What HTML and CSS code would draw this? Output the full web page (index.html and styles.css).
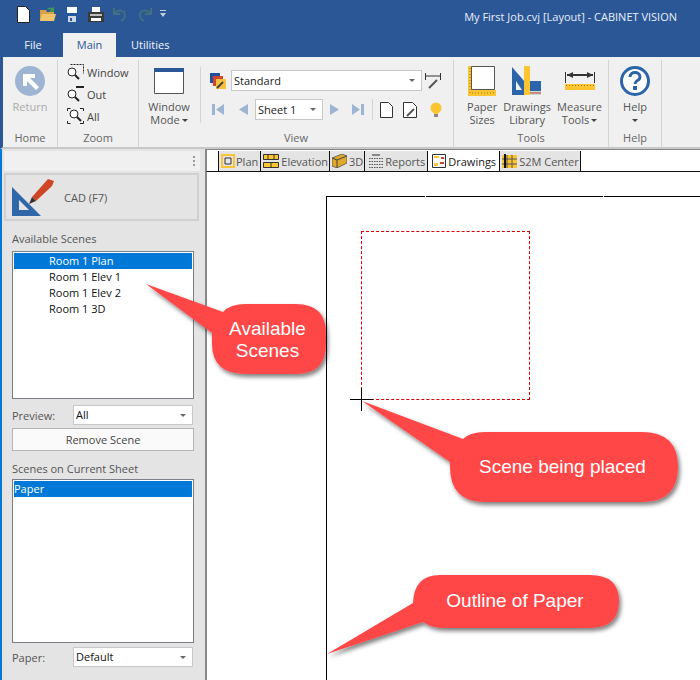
FILE: index.html
```html
<!DOCTYPE html>
<html>
<head>
    <meta charset="UTF-8">
    <title>My First Job.cvj [Layout] - CABINET VISION</title>
    <link rel="stylesheet" href="styles.css">
</head>
<body>
<div class="app">
    <header class="titlebar">
        <div class="qat">
            <svg width="13" height="17" viewBox="0 0 13 17"><path d="M.5.5h8l4 4v12H.5z" fill="#fff" stroke="#222"/></svg>
            <svg width="16" height="16" viewBox="0 0 16 16"><path d="M0 4h6l1 2h7v9H0z" fill="#d9a04a"/><path d="M2 8h14l-2 7H0z" fill="#f2c46b"/><path d="M7 4c1-3 3-3 5-2l2-1v5h-5l2-2c-1-1-2-1-4 0z" fill="#3f9a5a"/></svg>
            <svg width="14" height="15" viewBox="0 0 14 15"><path d="M0 0h14v15H0z" fill="#24589e"/><path d="M2 0h10v6H2z" fill="#fff"/><path d="M3 9h8v6H3z" fill="#cfd6e2"/><path d="M5 11h2v3H5z" fill="#24589e"/></svg>
            <svg width="16" height="15" viewBox="0 0 16 15"><path d="M4 0h8v5H4z" fill="#fff"/><path d="M0 5h16v10H0z" fill="#3a3a3a"/><path d="M2 7h12v2H2z" fill="#bbb"/><path d="M3 11h10v3H3z" fill="#fff"/></svg>
            <svg width="13" height="15" viewBox="0 0 13 15"><path d="M1 1v6h6M2 6c3-4 10-3 10 2 0 3-2 5-4 6" fill="none" stroke="#41707f" stroke-width="2"/></svg>
            <svg class="qat-redo" width="14" height="15" viewBox="0 0 14 15"><path d="M13 1v6H7M12 6C9 2 2 3 2 8c0 3 2 5 4 6" fill="none" stroke="#41707f" stroke-width="2"/></svg>
            <svg class="qat-more" width="6" height="8" viewBox="0 0 6 8"><path d="M0 0h6v1H0zM0 3h6L3 7z" fill="#c4cede"/></svg>
        </div>
        <div class="doc-title">My First Job.cvj [Layout] - CABINET VISION</div>
    </header>

    <nav class="ribbon-tabs">
        <span class="rtab rtab-file">File</span>
        <span class="rtab active">Main</span>
        <span class="rtab">Utilities</span>
    </nav>

    <section class="ribbon">
        <div class="group g-home">
            <div class="group-body">
                <div class="big disabled">
                    <svg width="30" height="30" viewBox="0 0 30 30"><circle cx="15" cy="15" r="15" fill="#9db4d2"/><path d="M8 8h12v4h-5l9 9-3 3-9-9v5H8z" fill="#fff"/></svg>
                    <span>Return</span>
                </div>
            </div>
            <div class="group-name">Home</div>
        </div>
        <div class="group g-zoom">
            <div class="group-body zoom-list">
                <div class="zoom-row"><svg width="17" height="16" viewBox="0 0 17 16"><path d="M3.500 .5h13v9" fill="none" stroke="#222" stroke-dasharray="2 1"/><circle cx="5" cy="8" r="4" fill="#fff" stroke="#222"/><path d="M8 11l4 4" stroke="#222" stroke-width="2"/></svg>Window</div>
                <div class="zoom-row"><svg width="17" height="16" viewBox="0 0 17 16"><path d="M9 1h8" stroke="#222" stroke-width="2"/><circle cx="5" cy="8" r="4" fill="#fff" stroke="#222"/><path d="M8 11l4 4" stroke="#222" stroke-width="2"/></svg>Out</div>
                <div class="zoom-row"><svg width="17" height="16" viewBox="0 0 17 16"><path d="M.5 3V.5h3M13 .5h3.500V3M16.500 13v2.500H13M3.500 15.500H.5V13" fill="none" stroke="#222"/><circle cx="7" cy="6" r="4" fill="#fff" stroke="#222"/><path d="M10 9l4 4" stroke="#222" stroke-width="2"/></svg>All</div>
            </div>
            <div class="group-name">Zoom</div>
        </div>
        <div class="group g-view">
            <div class="group-body view-body">
                <div class="big window-mode">
                    <svg width="30" height="26" viewBox="0 0 30 26"><path d="M.5.5h29v25H.5z" fill="#fff" stroke="#555"/><path d="M0 0h30v4H0z" fill="#2b5797"/></svg>
                    <span>Window<br>Mode<i class="caret"></i></span>
                </div>
                <div class="view-rows">
                    <div class="view-row">
                        <svg width="16" height="16" viewBox="0 0 16 16"><path d="M0 0h10v10H0z" fill="#1f4fa0"/><path d="M3 3h10v10H3z" fill="#d2452c"/><path d="M6 6h10v10H6z" fill="#f8c23c"/><path d="M7 15l6-6" stroke="#444" stroke-width="2"/></svg>
                        <div class="combo combo-std">Standard<i class="drop"></i></div>
                        <svg class="std-tool" width="16" height="16" viewBox="0 0 16 16"><path d="M.5 0v7M15.500 0v7M1 3h14" fill="none" stroke="#333"/><path d="M4 15l8-8" stroke="#555" stroke-width="2"/></svg>
                    </div>
                    <div class="view-row nav-row">
                        <svg width="12" height="11" viewBox="0 0 12 11"><path d="M0 0h3v11H0zM12 0v11L4 5.500z" fill="#9db4d2"/></svg>
                        <svg class="nav-prev" width="9" height="11" viewBox="0 0 9 11"><path d="M9 0v11L0 5.500z" fill="#9db4d2"/></svg>
                        <div class="combo combo-sheet">Sheet 1<i class="drop"></i></div>
                        <svg width="9" height="11" viewBox="0 0 9 11"><path d="M0 0v11l9-5.500z" fill="#9db4d2"/></svg>
                        <svg class="nav-last" width="12" height="11" viewBox="0 0 12 11"><path d="M9 0h3v11H9zM0 0v11l8-5.500z" fill="#9db4d2"/></svg>
                        <b class="sep"></b>
                        <svg width="13" height="16" viewBox="0 0 13 16"><path d="M.5.5h8l4 4v11H.5z" fill="#fff" stroke="#333"/></svg>
                        <svg class="page-tool" width="14" height="16" viewBox="0 0 14 16"><path d="M.5.5h9l4 4v11H.5z" fill="#fff" stroke="#333"/><path d="M4 14l7-7" stroke="#555" stroke-width="2"/></svg>
                        <svg class="bulb" width="12" height="16" viewBox="0 0 12 16"><circle cx="6" cy="6" r="5.500" fill="#fbc531"/><path d="M4 10h4v5H4z" fill="#fbc531"/><path d="M4 12h4v3H4z" fill="#888"/></svg>
                    </div>
                </div>
            </div>
            <div class="group-name">View</div>
        </div>
        <div class="group g-tools">
            <div class="group-body tools-body">
                <div class="big tool">
                    <svg width="28" height="30" viewBox="0 0 28 30"><path d="M0 0h6v24h22v6H0z" fill="#fbc531"/><path d="M3.500.5h23v23h-23z" fill="#fff" stroke="#555"/><path d="M2 2v25h24" fill="none" stroke="#a8791a" stroke-dasharray="1 2"/></svg>
                    <span>Paper<br>Sizes</span>
                </div>
                <div class="big tool">
                    <svg width="30" height="30" viewBox="0 0 30 30"><path d="M0 1l13 15v13H0z" fill="#2b64a8"/><path d="M4 15l6 9H4z" fill="#f0f0f0"/><path d="M12 0h6v29h-6z" fill="#fbc531"/><path d="M18 15h11v10H18z" fill="#2b64a8"/><path d="M18 25h11v4H18z" fill="#cfe0cf"/><path d="M18 27h11" stroke="#b33"/></svg>
                    <span>Drawings<br>Library</span>
                </div>
                <div class="big tool">
                    <svg width="30" height="30" viewBox="0 0 30 30"><path d="M.5 6v11M29.500 6v11" stroke="#333"/><path d="M2 9h26" stroke="#333" stroke-width="2"/><path d="M8 6v6L2 9zM22 6v6l6-3z" fill="#333"/><path d="M0 18h30v6H0z" fill="#fbc531"/><path d="M1 19.500h28" stroke="#a8791a" stroke-dasharray="1 2"/></svg>
                    <span>Measure<br>Tools<i class="caret"></i></span>
                </div>
            </div>
            <div class="group-name">Tools</div>
        </div>
        <div class="group g-help">
            <div class="group-body">
                <div class="big">
                    <svg width="30" height="30" viewBox="0 0 30 30"><circle cx="15" cy="15" r="13.500" fill="#fff" stroke="#2b64a8" stroke-width="3"/><path d="M10 11c0-6 10-6 10 0 0 4-5 3-5 7" fill="none" stroke="#2b64a8" stroke-width="3"/><path d="M13 20h4v4h-4z" fill="#2b64a8"/></svg>
                    <span>Help<br><i class="caret solo"></i></span>
                </div>
            </div>
            <div class="group-name">Help</div>
        </div>
    </section>

    <main class="workspace">
        <aside class="side">
            <div class="side-grip"><span></span></div>
            <div class="cad-btn">
                <svg width="42" height="38" viewBox="0 0 42 38"><path d="M0 9l29 29H0z" fill="#2f67a8"/><path d="M7 22l10 10H7z" fill="#e4e4e4"/><path d="M20 19L36 1l6 2-2 5-16 15z" fill="#cf4527"/><path d="M20 19l4 4-7 3z" fill="#333"/></svg>
                <span>CAD (F7)</span>
            </div>
            <div class="side-label">Available Scenes</div>
            <div class="listbox list-top">
                <div class="item sel indent">Room 1 Plan</div>
                <div class="item indent">Room 1 Elev 1</div>
                <div class="item indent">Room 1 Elev 2</div>
                <div class="item indent">Room 1 3D</div>
            </div>
            <div class="field">
                <label>Preview:</label>
                <div class="combo combo-side">All<i class="drop"></i></div>
            </div>
            <div class="side-btn">Remove Scene</div>
            <div class="side-label tight">Scenes on Current Sheet</div>
            <div class="listbox list-bottom">
                <div class="item sel">Paper</div>
            </div>
            <div class="field field-last">
                <label>Paper:</label>
                <div class="combo combo-side">Default<i class="drop"></i></div>
            </div>
        </aside>
        <div class="splitter"></div>
        <div class="doc">
            <div class="doc-tabs">
                <span class="dtab dtab-plan"><svg width="14" height="14" viewBox="0 0 14 14"><path d="M1 1h12v12H1z" fill="none" stroke="#fbc531" stroke-width="2"/><path d="M4 4h6v6H4z" fill="none" stroke="#333"/></svg>Plan</span>
                <span class="dtab"><svg width="16" height="14" viewBox="0 0 16 14"><path d="M0 0h16v6H0zM0 8h16v6H0z" fill="#fbc531"/><path d="M.5.5h15v5H.5zM.5 8.500h15v5H.5zM5 0v6M11 0v6M8 8v6" fill="none" stroke="#333"/></svg>Elevation</span>
                <span class="dtab"><svg width="15" height="14" viewBox="0 0 15 14"><path d="M0 4l10-4 5 2v7L5 14l-5-2z" fill="#e0a92c" stroke="#444" stroke-width=".7"/><path d="M5 14V6l10-4M0 4l5 2" fill="none" stroke="#444"/></svg>3D</span>
                <span class="dtab dtab-wide"><svg width="14" height="14" viewBox="0 0 14 14"><path d="M3 0h8v2H3z" fill="#888"/><path d="M0 4.500h14M0 7.500h14M0 10.500h14M0 13.500h14" fill="none" stroke="#555" stroke-dasharray="1.500 1"/></svg>Reports</span>
                <span class="dtab current"><svg width="14" height="14" viewBox="0 0 14 14"><path d="M.5.5h13v13H.5z" fill="#fff" stroke="#333"/><path d="M2 2h5v2H2zM2 9h4v3H2z" fill="#fbc531"/><path d="M9 3h3v2H9zM8 8h4v2H8z" fill="#d2452c"/></svg>Drawings</span>
                <span class="dtab"><svg width="15" height="14" viewBox="0 0 15 14"><path d="M0 1h15v13H0z" fill="#fbc531"/><path d="M5 1v13M10 1v13M0 5h15M0 10h15" stroke="#555"/><path d="M3 0v14" stroke="#111" stroke-width="2"/></svg>S2M Center</span>
            </div>
            <div class="canvas">
                <div class="paper">
                    <i class="paper-gap gap-a"></i>
                    <i class="paper-gap gap-b"></i>
                    <div class="scene"></div>
                </div>
                <svg class="cross" width="23" height="23" viewBox="0 0 23 23"><path d="M11.500 0v23M0 11.500h23" stroke="#000"/></svg>
            </div>
        </div>
    </main>

    <svg class="callouts" width="700" height="680" viewBox="0 0 700 680">
        <defs>
            <filter id="drop" x="-10%" y="-10%" width="125%" height="130%">
                <feDropShadow dx="2" dy="3" stdDeviation="2" flood-color="#000" flood-opacity=".5"/>
            </filter>
        </defs>
        <g filter="url(#drop)" fill="#ff4747">
            <path d="M146 284L223 312Q230 304 246 304H296Q326 304 326 334V344Q326 374 296 374H246Q212 374 212 344V333Z"/>
            <path d="M362 401L463 439Q470 432 485 432H642Q678 432 678 467Q678 502 642 502H485Q450 502 450 467V462Z"/>
            <path d="M327 654L413 603Q414 575 440 575H590Q619 575 619 601Q619 628 590 628H445Q431 628 423 622Z"/>
        </g>
    </svg>
    <div class="note note-a">Available<br>Scenes</div>
    <div class="note note-b">Scene being placed</div>
    <div class="note note-c">Outline of Paper</div>
</div>
</body>
</html>
```

FILE: styles.css
```css
* {
    box-sizing: border-box;
}

html, body {
    margin: 0;
    height: 100%;
}

body {
    font-family: "Open Sans", "Noto Sans", sans-serif;
    font-size: 11px;
    color: #444;
    background: #fff;
    overflow: hidden;
}

.app {
    position: relative;
    width: 700px;
    height: 680px;
    overflow: hidden;
    display: flex;
    flex-direction: column;
}

/* title bar */
.titlebar {
    height: 33px;
    background: #2b5797;
    display: flex;
    align-items: center;
    justify-content: space-between;
    padding: 0 23px 5px 17px;
    flex: none;
}

.qat {
    display: flex;
    align-items: center;
    gap: 9px;
}

.qat svg:first-child {
    margin-right: 1px;
}

.qat-redo {
    margin-left: 3px;
}

.qat-more {
    margin-left: -1px;
}

.doc-title {
    color: #e8eef7;
    margin-top: 5px;
}

.ribbon-tabs {
    height: 24px;
    background: #2b5797;
    display: flex;
    padding-left: 3px;
    flex: none;
}

.rtab {
    height: 24px;
    line-height: 24px;
    padding: 0 15px;
    color: #f2f5fa;
}

.rtab-file {
    width: 60px;
    padding: 0;
    text-align: center;
}

.rtab.active {
    width: 53px;
    padding: 0;
    text-align: center;
    background: #f0f0f0;
    color: #2b5797;
}

/* ribbon */
.ribbon {
    height: 92px;
    flex: none;
    background: #f0f0f0;
    border-left: 3px solid #2b5797;
    border-bottom: 2px solid #c8c8c8;
    display: flex;
    padding-top: 3px;
}

.group {
    display: flex;
    flex-direction: column;
    border-right: 1px solid #d4d4d4;
}

.group-body {
    flex: 1;
    display: flex;
    justify-content: center;
}

.group-name {
    height: 16px;
    line-height: 14px;
    text-align: center;
    color: #666;
}

.g-home { width: 55px; }
.g-zoom { width: 81px; }
.g-view { width: 315px; }
.g-tools { width: 155px; }
.g-help { width: 53px; }

.big {
    display: flex;
    flex-direction: column;
    align-items: center;
    padding-top: 6px;
    line-height: 13px;
    text-align: center;
    color: #555;
}

.big svg {
    margin-bottom: 4px;
}

.big.disabled {
    color: #aaa;
}

.caret {
    display: inline-block;
    width: 0;
    height: 0;
    border: 3px solid transparent;
    border-top: 3px solid #444;
    border-bottom: 0;
    margin-left: 2px;
    vertical-align: 2px;
}

.caret.solo {
    margin-left: 0;
}

.zoom-list {
    flex-direction: column;
    justify-content: flex-start;
    padding: 4px 0 0 9px;
    gap: 6px;
}

.zoom-row {
    display: flex;
    align-items: center;
    gap: 3px;
    height: 16px;
}

.view-body {
    justify-content: flex-start;
    padding-left: 7px;
}

.big.window-mode {
    width: 46px;
    padding-top: 8px;
}

.big.window-mode svg {
    margin-bottom: 6px;
}

.view-rows {
    align-self: flex-start;
    height: 56px;
    margin: 7px 0 0 8px;
    padding: 3px 0 0 9px;
    border-left: 1px solid #d4d4d4;
    display: flex;
    flex-direction: column;
    gap: 8px;
}

.view-row {
    display: flex;
    align-items: center;
    gap: 5px;
}

.std-tool {
    margin-left: -2px;
}

.nav-row {
    gap: 7px;
    padding-left: 2px;
}

.nav-prev { margin-left: 8px; }
.nav-last { margin-left: 6px; }

.sep {
    width: 1px;
    height: 21px;
    background: #d4d4d4;
    margin-left: 1px;
}

.page-tool { margin-left: 3px; }
.bulb { margin-left: 6px; }

.combo {
    position: relative;
    height: 21px;
    line-height: 19px;
    background: #fff;
    border: 1px solid #c8c8c8;
    padding-left: 2px;
    color: #222;
}

.combo-std {
    width: 191px;
}

.combo-sheet {
    width: 68px;
}

.combo-side {
    width: 120px;
    height: 20px;
    line-height: 18px;
    margin-right: 1px;
    color: #111;
}

.drop {
    position: absolute;
    right: 6px;
    top: 8px;
    width: 0;
    height: 0;
    border: 3px solid transparent;
    border-top: 3px solid #666;
    border-bottom: 0;
}

.tools-body {
    gap: 6px;
    padding-left: 7px;
}

/* left panel */
.workspace {
    flex: 1;
    display: flex;
    min-height: 0;
}

.side {
    width: 205px;
    flex: none;
    background: #e4e4e4;
    border-left: 2px solid #0078d7;
    padding: 0 0 0 2px;
}

.side-grip {
    height: 20px;
    background: #f0f0f0;
    margin: 2px 5px 0 0;
    position: relative;
}

.side-grip span {
    position: absolute;
    right: 5px;
    top: 5px;
    width: 2px;
    height: 10px;
    background: repeating-linear-gradient(#999 0 2px, transparent 2px 4px);
}

.cad-btn {
    width: 195px;
    height: 48px;
    margin-top: 2px;
    border: 2px solid #d0d0d0;
    display: flex;
    align-items: center;
    padding-left: 6px;
    gap: 10px;
    color: #555;
}

.side-label {
    margin: 10px 0 5px 8px;
    color: #555;
    line-height: 15px;
}

.side-label.tight {
    margin-bottom: 3px;
}

.listbox {
    width: 182px;
    margin-left: 8px;
    background: #fff;
    border: 1px solid #7a7f87;
    padding: 1px;
    color: #111;
}

.list-top { height: 148px; }
.list-bottom { height: 164px; }

.item {
    height: 16px;
    line-height: 16px;
}

.item.sel {
    background: #0078d7;
    color: #fff;
}

.indent {
    padding-left: 35px;
}

.field {
    display: flex;
    align-items: center;
    justify-content: space-between;
    width: 182px;
    margin: 6px 0 0 8px;
    color: #555;
}

.field-last {
    margin-top: 4px;
}

.side-btn {
    width: 182px;
    height: 23px;
    line-height: 21px;
    margin: 3px 0 0 8px;
    text-align: center;
    background: #fafafa;
    border: 1px solid #b4b4b4;
    color: #444;
}

.splitter {
    width: 1px;
    background: #888;
    flex: none;
}

/* document area */
.doc {
    flex: 1;
    min-width: 0;
    display: flex;
    flex-direction: column;
    background: #fff;
}

.doc-tabs {
    height: 23px;
    flex: none;
    display: flex;
    align-items: flex-end;
    padding-left: 11px;
    background: #fff;
    border-top: 1px solid #888;
    border-bottom: 1px solid #111;
    border-left: 1px solid #888;
}

.dtab {
    height: 20px;
    display: flex;
    align-items: center;
    gap: 2px;
    padding: 0 1px 0 2px;
    background: #e4e4e4;
    border-left: 1px solid #111;
    border-right: 1px solid #111;
    color: #555;
    margin-right: -1px;
}

.dtab-plan {
    gap: 1px;
    padding-right: 2px;
}

.dtab-wide {
    padding: 0 2px 0 4px;
}

.dtab.current {
    background: #fff;
    color: #222;
    padding: 0 3px 0 4px;
}

.canvas {
    flex: 1;
    position: relative;
    padding: 24px 0 0 119px;
    overflow: hidden;
    border-left: 1px solid #888;
}

.paper {
    position: relative;
    height: 600px;
    border-left: 1px solid #000;
    border-top: 1px solid #000;
    padding: 34px 0 0 34px;
}

.paper-gap {
    position: absolute;
    top: -1px;
    width: 1px;
    height: 1px;
    background: #fff;
}

.gap-a { left: 98px; }
.gap-b { left: 276px; }

.scene {
    width: 169px;
    height: 169px;
    border: 1px dashed #d80000;
}

.cross {
    position: absolute;
    left: 143px;
    top: 216px;
}

/* callouts on top of everything */
.callouts {
    position: absolute;
    left: 0;
    top: 0;
    pointer-events: none;
}

.note {
    position: absolute;
    color: #fff;
    font-family: "Liberation Sans", Arial, sans-serif;
    font-size: 19px;
    line-height: 22px;
    text-align: center;
}

.note-a { left: 211px; top: 318px; width: 113px; }
.note-b { left: 450px; top: 456px; width: 225px; }
.note-c { left: 415px; top: 590px; width: 200px; }
```
